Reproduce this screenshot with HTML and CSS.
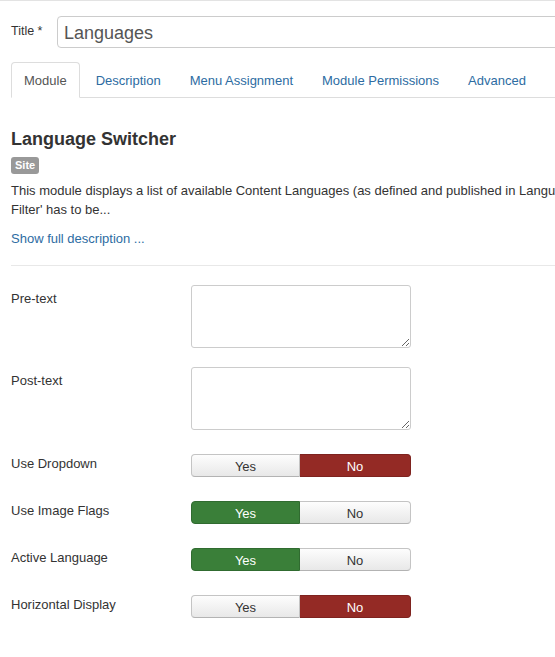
FILE: index.html
```html
<!DOCTYPE html>
<html>
<head>
<meta charset="utf-8">
<link rel="stylesheet" href="styles.css">
</head>
<body>
<div class="page">
  <div class="title-row">
    <label class="title-label">Title *</label>
    <input class="title-input" type="text" value="Languages">
  </div>
  <ul class="tabs">
    <li class="tab active">Module</li>
    <li class="tab">Description</li>
    <li class="tab">Menu Assignment</li>
    <li class="tab">Module Permissions</li>
    <li class="tab">Advanced</li>
  </ul>
  <h2 class="mod-title">Language Switcher</h2>
  <span class="badge">Site</span>
  <p class="desc">This module displays a list of available Content Languages (as defined and published in Language Manager Content tab) for switching between them when you want to use Joomla! as a multilingual site. The plugin 'System - Language<br>Filter' has to be...</p>
  <a class="more">Show full description ...</a>
  <hr class="sep">
  <div class="fields">
    <div class="field">
      <div class="label">Pre-text</div>
      <textarea class="area"></textarea>
    </div>
    <div class="field">
      <div class="label">Post-text</div>
      <textarea class="area"></textarea>
    </div>
    <div class="field toggle-field">
      <div class="label">Use Dropdown</div>
      <div class="toggle"><span class="btn">Yes</span><span class="btn no-on">No</span></div>
    </div>
    <div class="field toggle-field">
      <div class="label">Use Image Flags</div>
      <div class="toggle"><span class="btn yes-on">Yes</span><span class="btn">No</span></div>
    </div>
    <div class="field toggle-field">
      <div class="label">Active Language</div>
      <div class="toggle"><span class="btn yes-on">Yes</span><span class="btn">No</span></div>
    </div>
    <div class="field toggle-field">
      <div class="label">Horizontal Display</div>
      <div class="toggle"><span class="btn">Yes</span><span class="btn no-on">No</span></div>
    </div>
  </div>
</div>
</body>
</html>
```
FILE: styles.css
```css
html, body {
  margin: 0;
  padding: 0;
  background: #fff;
  overflow: hidden;
}
body {
  font-family: "Liberation Sans", Arial, sans-serif;
  font-size: 13px;
  color: #333;
}
.page {
  width: 760px;
  border-top: 1px solid #e3e3e3;
  padding: 0 0 0 11px;
}
.title-row {
  display: flex;
  align-items: center;
  margin-top: 15px;
}
.title-label {
  width: 46px;
  font-size: 12.5px;
  color: #333;
  margin-top: -2px;
}
.title-input {
  box-sizing: border-box;
  width: 700px;
  height: 32px;
  border: 1px solid #ccc;
  border-radius: 4px;
  padding: 2px 6px 0 6px;
  font-family: "Liberation Sans", Arial, sans-serif;
  font-size: 18px;
  color: #555;
  outline: none;
}
.tabs {
  list-style: none;
  margin: 14px 0 0 0;
  padding: 0;
  display: flex;
  border-bottom: 1px solid #ddd;
}
.tab {
  padding: 9px 13.5px 7px 13.5px;
  line-height: 18px;
  font-size: 13px;
  color: #2d6ca2;
  border: 1px solid transparent;
  border-radius: 4px 4px 0 0;
  margin-bottom: -1px;
}
.tab.active {
  color: #555;
  background: #fff;
  border-color: #ddd #ddd transparent #ddd;
  padding: 9px 12px 7px 12px;
  margin-right: 1.5px;
}
.mod-title {
  margin: 31px 0 0 0;
  font-size: 18px;
  line-height: 21px;
  font-weight: bold;
  color: #333;
}
.badge {
  display: inline-block;
  margin-top: 7px;
  background: #999;
  color: #fff;
  font-size: 11px;
  font-weight: bold;
  line-height: 17px;
  padding: 0 4px;
  border-radius: 3px;
}
.desc {
  margin: 7px 0 0 0;
  line-height: 19px;
  white-space: nowrap;
}
.more {
  display: block;
  margin-top: 10px;
  line-height: 19px;
  color: #2d6ca2;
}
.sep {
  margin: 17px 0 0 0;
  border: 0;
  border-top: 1px solid #e8e8e8;
}
.fields {
  display: flex;
  flex-direction: column;
  padding-top: 19px;
}
.field {
  display: flex;
  align-items: flex-start;
  margin-bottom: 19px;
}
.toggle-field {
  margin-top: 5px;
}
.label {
  width: 180px;
  padding-top: 6px;
  line-height: 16px;
  font-size: 13px;
}
.toggle-field .label {
  padding-top: 2px;
}
.area {
  box-sizing: border-box;
  width: 220px;
  height: 63px;
  border: 1px solid #ccc;
  border-radius: 3px;
  margin: 0;
  padding: 4px 6px;
  font-family: inherit;
}
.toggle {
  display: flex;
  width: 220px;
  height: 23px;
}
.btn {
  box-sizing: border-box;
  width: 110px;
  text-align: center;
  line-height: 21px;
  padding-top: 1px;
  font-size: 13px;
  color: #333;
  background: linear-gradient(#fdfdfd, #e8e8e8);
  border: 1px solid #c4c4c4;
  border-bottom-color: #b3b3b3;
}
.btn:first-child {
  width: 109px;
  border-radius: 4px 0 0 4px;
}
.btn:last-child {
  width: 111px;
  border-radius: 0 4px 4px 0;
  border-left: 0;
}
.btn.no-on {
  background: #942a25;
  border-color: #7e231f;
  color: #fff;
}
.btn.yes-on {
  background: #3a7f39;
  border-color: #306b30;
  color: #fff;
}
```
